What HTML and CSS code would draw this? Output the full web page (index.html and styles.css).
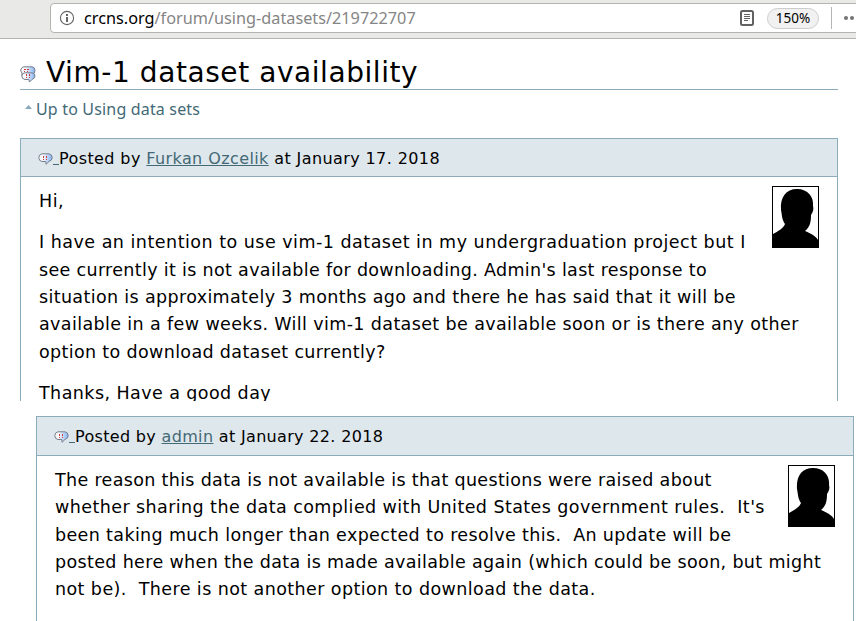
FILE: index.html
```html
<!DOCTYPE html>
<html lang="en">
<head>
<meta charset="utf-8">
<title>Vim-1 dataset availability</title>
<link rel="stylesheet" href="styles.css">
</head>
<body>
<svg class="defs" width="0" height="0">
  <defs>
    <linearGradient id="blue"><stop offset="0.3" stop-color="#f8fafc"/><stop offset="1" stop-color="#83b2f2"/></linearGradient>
    <symbol id="bubble" viewBox="0 0 15 12">
      <path d="M4 .8H11Q14.2 1.4 14.2 4.5T11 8.4L8 11.3L7.8 8.5H4Q.8 8 .8 4.7T4 .8Z" fill="url(#blue)" stroke="#777e8b"/>
      <path d="M5 3h1v2H5zM8 3h1v2H8zM5 6h1v1H5zM8 6h1v1H8z" fill="#d0393e"/>
    </symbol>
    <symbol id="person" viewBox="0 0 45 60">
      <path d="M0 60V47C5 44 10 42 12 37C9 33 9 28 8 23C7 10 13 2 24 2C35 2 41 10 40 19C41 22 40 25 38 28C38 35 37 40 32 44C37 46 43 49 45 53V60Z"/>
    </symbol>
  </defs>
</svg>
<header class="toolbar">
  <div class="address">
    <svg class="info" viewBox="0 0 16 16"><circle cx="8" cy="8" r="6.6" fill="none" stroke="#666" stroke-width="1.1"/><path d="M7 4h2v2H7zM7 7h2v5H7z" fill="#666"/></svg>
    <span class="url"><b>crcns.org</b>/forum/using-datasets/219722707</span>
    <svg class="reader" viewBox="0 0 14 16"><rect x="1" y="1" width="12" height="14" rx="1.5" fill="#fff" stroke="#626262" stroke-width="2"/><path d="M4 4.5h6M4 6.5h6M4 8.5h6M4 10.5h4" stroke="#666"/></svg>
    <span class="zoom">150%</span>
    <span class="divider"></span>
    <svg class="dots" viewBox="0 0 14 6"><circle cx="3" cy="3" r="2" fill="#747474"/><circle cx="9" cy="3" r="2" fill="#747474"/></svg>
  </div>
</header>
<main>
  <div class="heading">
    <svg class="chat" viewBox="0 0 16 17">
      <path d="M4 .8H12Q15 1 15 4.5T12 8H5L2 10V7Q0 5 1 3Q2 1 4 .8Z" fill="url(#blue)" stroke="#777e8b"/>
      <path d="M5 6.8H12Q15.2 7.5 15 10T12 13.5L9.5 16L8.8 13.5H5Q1.8 13 1.8 10T5 6.8Z" fill="url(#blue)" stroke="#777e8b"/>
      <path d="M4 3h2v1H4zM7 3h2v1H7zM4 5h1v1H4zM7 5h1v1H7zM6 8h1v2H6zM9 8h1v2H9zM6 11h1v1H6zM9 11h1v1H9z" fill="#d0393e"/>
    </svg>
    <h1>Vim-1 dataset availability</h1>
  </div>
  <a class="up"><svg viewBox="0 0 7 4"><path d="M0 4L3.5 0L7 4Z" fill="#86a8b8"/></svg><span>Up to Using data sets</span></a>
  <article class="post first">
    <div class="byline"><svg class="mark"><use href="#bubble"/></svg><span class="gap"></span><span class="text h1l">Posted by <a>Furkan Ozcelik</a> at January 17. 2018</span></div>
    <div class="content">
      <svg class="avatar"><use href="#person"/></svg>
      <p><span class="a1">Hi,</span></p>
      <p><span class="a2">I have an intention to use vim-1 dataset in my undergraduation project but I</span><br>
      <span class="a3">see currently it is not available for downloading. Admin's last response to</span><br>
      <span class="a4">situation is approximately 3 months ago and there he has said that it will be</span><br>
      <span class="a5">available in a few weeks. Will vim-1 dataset be available soon or is there any other</span><br>
      <span class="a6">option to download dataset currently?</span></p>
      <p><span class="a7">Thanks, Have a good day</span></p>
    </div>
  </article>
  <article class="post reply">
    <div class="byline"><svg class="mark"><use href="#bubble"/></svg><span class="gap"></span><span class="text h2l">Posted by <a>admin</a> at January 22. 2018</span></div>
    <div class="content">
      <svg class="avatar"><use href="#person"/></svg>
      <p><span class="b1">The reason this data is not available is that questions were raised about</span><br>
      <span class="b2">whether sharing the data complied with United States government rules.&nbsp; It's</span><br>
      <span class="b3">been taking much longer than expected to resolve this.&nbsp; An update will be</span><br>
      <span class="b4">posted here when the data is made available again (which could be soon, but might</span><br>
      <span class="b5">not be).&nbsp; There is not another option to download the data.</span></p>
    </div>
  </article>
</main>
</body>
</html>
```
FILE: styles.css
```css
* { box-sizing: border-box; }
html, body { margin: 0; height: 621px; overflow: hidden; background: #fff; }
body { font-family: "DejaVu Sans", Verdana, sans-serif; color: #000; }
.defs { display: block; }
.toolbar { height: 39px; background: #e9e9e8; border-bottom: 1px solid #b5b4ae; padding: 3px 0 0 50px; }
.address { height: 30px; width: 830px; background: #fff; border: 1px solid #b4b4b1; border-radius: 4px; display: flex; align-items: center; padding-left: 8px; }
.info { width: 16px; height: 16px; }
.url { font: 16.25px/28px "Noto Sans", sans-serif; color: #858585; margin-left: 9px; width: 656px; white-space: nowrap; }
.url b { font-weight: 400; color: #000; }
.reader { width: 14px; height: 16px; flex: none; }
.zoom { flex: none; margin-left: 13px; width: 52px; height: 21px; border: 1px solid #ccc; border-radius: 11px; background: #f1f1f1; font: 13.5px/19px "Noto Sans", sans-serif; text-align: center; }
.divider { flex: none; width: 1px; height: 22px; background: #b5b5b5; margin-left: 12px; }
.dots { flex: none; width: 14px; height: 6px; margin-left: 11px; }
main { padding-left: 20px; }
.heading { width: 818px; height: 51px; border-bottom: 1px solid #8cacbb; display: flex; }
.chat { width: 16px; height: 17px; margin-top: 27px; flex: none; }
h1 { margin: 16px 0 0 10px; font-size: 28px; line-height: 36px; font-weight: 400; white-space: nowrap; letter-spacing: .57px; }
.up { display: flex; height: 48px; padding-left: 5px; color: #436976; font: 16px/38px "Noto Sans", sans-serif; letter-spacing: .17px; }
.up svg { width: 7px; height: 4px; margin: 15px 4px 0 0; }
.post { width: 818px; border: 1px solid #8cacbb; border-bottom: 0; overflow: hidden; }
.first { height: 263px; }
.reply { margin: 15px 0 0 16px; height: 205px; }
.byline { height: 38px; background: #dee7ec; border-bottom: 1px solid #8cacbb; display: flex; padding-left: 17px; font-size: 16px; line-height: 40px; white-space: nowrap; }
.reply .byline { height: 39px; }
.mark { width: 15px; height: 12px; margin-top: 14px; }
.gap { width: 6px; height: 26px; border-bottom: 1px solid #436976; }
.text a { color: #436976; text-decoration: underline; }
.content { padding: 11px 18px 0; font-size: 17.5px; line-height: 27.35px; white-space: nowrap; }
.content p { margin: 0 0 14px; }
.avatar { float: right; width: 47px; height: 62px; margin-top: -2px; border: 1px solid #000; }
.h1l { letter-spacing: .4px; }
.h2l { letter-spacing: .33px; }
.a1 { letter-spacing: .5px; }
.a2 { letter-spacing: .49px; }
.a3 { letter-spacing: .33px; }
.a4 { letter-spacing: .36px; }
.a5 { letter-spacing: .38px; }
.a6 { letter-spacing: .35px; }
.a7 { letter-spacing: .43px; }
.b1 { letter-spacing: .33px; }
.b2 { letter-spacing: .42px; }
.b3 { letter-spacing: .36px; }
.b4 { letter-spacing: .35px; }
.b5 { letter-spacing: .41px; }
```
